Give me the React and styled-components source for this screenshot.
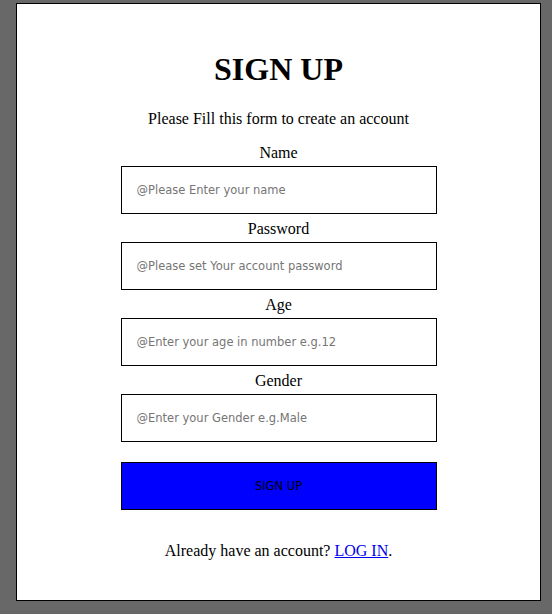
import React from "react";
import styled, { createGlobalStyle } from "styled-components";

const Global = createGlobalStyle`
  html, body { margin: 0; padding: 0; }
  body {
    background: #686868;
    font-family: "Liberation Serif", "Times New Roman", serif;
    color: #000;
  }
`;

const Page = styled.div`
  padding: 3px 11px 13px 16px;
`;

const Card = styled.form`
  box-sizing: border-box;
  width: 525px;
  height: 598px;
  background: #fff;
  border: 1px solid #000;
  display: flex;
  flex-direction: column;
  align-items: center;
  text-align: center;
  padding-top: 47px;
`;

const Title = styled.h1`
  margin: 0;
  font-size: 32px;
  line-height: 37px;
  font-weight: bold;
`;

const Subtitle = styled.p`
  margin: 22px 0 0;
  font-size: 16px;
  line-height: 18px;
`;

const Fields = styled.div`
  margin-top: 16px;
  display: flex;
  flex-direction: column;
  align-items: center;
`;

const Field = styled.div`
  display: flex;
  flex-direction: column;
  align-items: center;
  margin-top: ${(p) => (p.$first ? 0 : 6)}px;
`;

const Label = styled.label`
  font-size: 16px;
  line-height: 18px;
`;

const Input = styled.input`
  box-sizing: border-box;
  margin-top: 4px;
  width: 316px;
  height: 48px;
  border: 1px solid #000;
  padding: 0 0 0 15px;
  font-family: "DejaVu Sans", Verdana, sans-serif;
  font-size: 11.5px;
  outline: none;
  &::placeholder { color: #757575; }
`;

const Button = styled.button`
  box-sizing: border-box;
  margin-top: 20px;
  width: 316px;
  height: 48px;
  background: #0000ff;
  border: 1px solid #000;
  color: #000;
  font-family: "DejaVu Sans", Verdana, sans-serif;
  font-size: 11.5px;
  cursor: pointer;
`;

const Footer = styled.p`
  margin: 32px 0 0;
  font-size: 16px;
  line-height: 18px;
`;

const Link = styled.a`
  color: #0000ee;
  text-decoration: underline;
`;

const fields = [
  { id: "name", label: "Name", ph: "@Please Enter your name", type: "text" },
  { id: "password", label: "Password", ph: "@Please set Your account password", type: "password" },
  { id: "age", label: "Age", ph: "@Enter your age in number e.g.12", type: "text" },
  { id: "gender", label: "Gender", ph: "@Enter your Gender e.g.Male", type: "text" },
];

export default function App() {
  return (
    <>
      <Global />
      <Page>
        <Card onSubmit={(e) => e.preventDefault()}>
          <Title>SIGN UP</Title>
          <Subtitle>Please Fill this form to create an account</Subtitle>
          <Fields>
            {fields.map((f, i) => (
              <Field key={f.id} $first={i === 0}>
                <Label htmlFor={f.id}>{f.label}</Label>
                <Input id={f.id} type={f.type} placeholder={f.ph} />
              </Field>
            ))}
            <Button type="submit">SIGN UP</Button>
          </Fields>
          <Footer>
            Already have an account? <Link href="#">LOG IN</Link>.
          </Footer>
        </Card>
      </Page>
    </>
  );
}
